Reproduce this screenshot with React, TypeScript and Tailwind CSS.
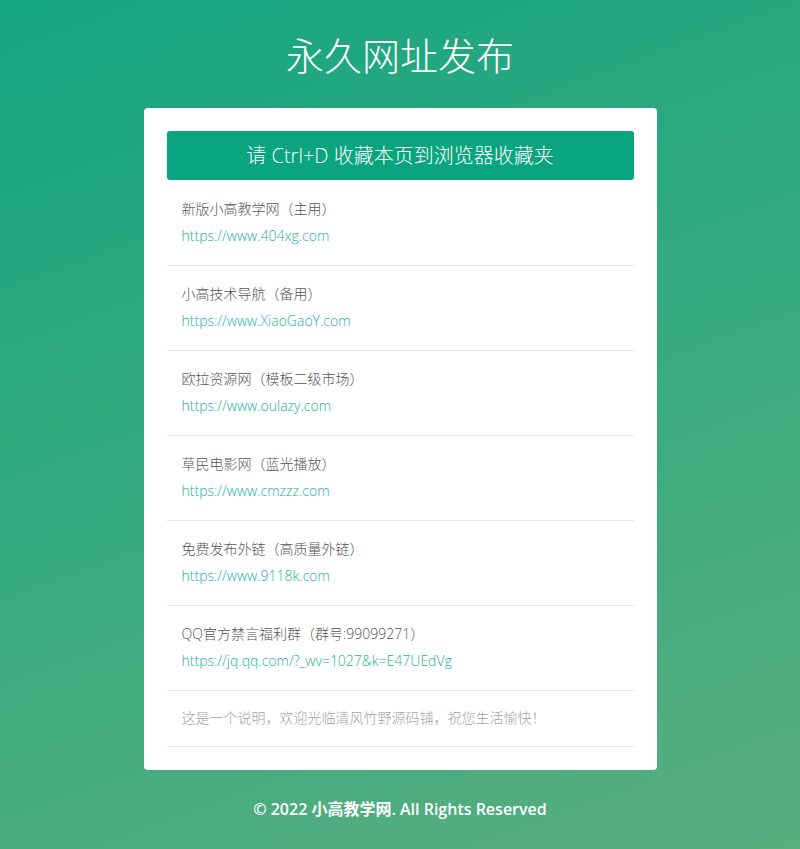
import React from "react";

const sites = [
  { name: "新版小高教学网（主用）", url: "https://www.404xg.com" },
  { name: "小高技术导航（备用）", url: "https://www.XiaoGaoY.com" },
  { name: "欧拉资源网（模板二级市场）", url: "https://www.oulazy.com" },
  { name: "草民电影网（蓝光播放）", url: "https://www.cmzzz.com" },
  { name: "免费发布外链（高质量外链）", url: "https://www.9118k.com" },
  { name: "QQ官方禁言福利群（群号:99099271）", url: "https://jq.qq.com/?_wv=1027&k=E47UEdVg" },
];

export default function App() {
  return (
    <div
      className="min-h-[849px] bg-[linear-gradient(160deg,#15a67f,#5aae80)] pt-[31px] pb-[29px]"
      style={{ fontFamily: '"Open Sans", "Noto Sans CJK SC", sans-serif' }}
    >
      <h1 className="text-center text-[38px] leading-[48px] font-light text-white">永久网址发布</h1>

      <div className="mx-auto mt-[29px] w-[513px] rounded bg-white p-[23px]">
        <div className="flex h-[49px] items-center justify-center rounded-[3px] bg-[#0aa57f] text-[20px] font-light text-white">
          请 Ctrl+D 收藏本页到浏览器收藏夹
        </div>

        <ul className="mt-px">
          {sites.map((s) => (
            <li key={s.url} className="border-b border-[#e6e6e6] px-[15px] pt-4 pb-[17px] text-[14px] font-light">
              <p className="leading-6 text-[#555]">{s.name}</p>
              <a href="#" className="mt-[3px] block leading-6 text-[#22b396]">
                {s.url}
              </a>
            </li>
          ))}
          <li className="border-b border-[#e6e6e6] px-[15px] pt-[15px] pb-4 text-[14px] leading-6 font-light text-[#a3a3a3]">
            这是一个说明，欢迎光临清风竹野源码铺，祝您生活愉快！
          </li>
        </ul>
      </div>

      <p className="mt-[27px] text-center text-[16px] leading-6 font-semibold text-white">
        © 2022 小高教学网. All Rights Reserved
      </p>
    </div>
  );
}
